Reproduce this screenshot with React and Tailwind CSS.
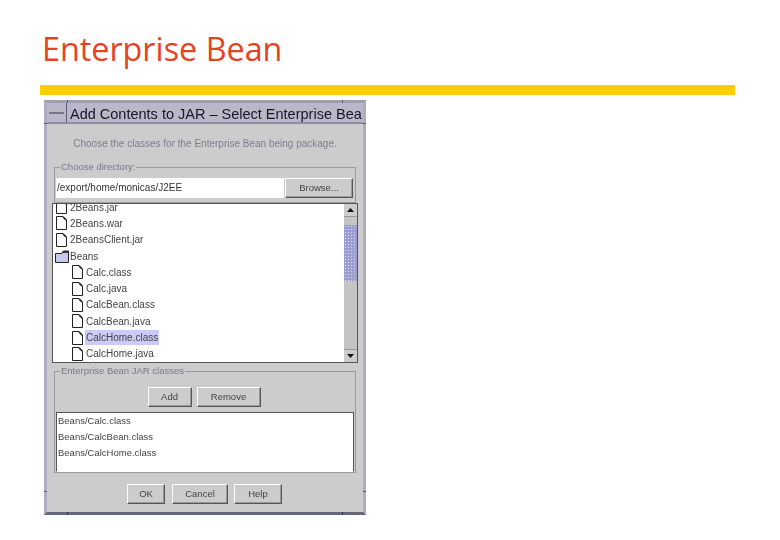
const Sans = "font-['Liberation_Sans',sans-serif]";

function FileIcon() {
  return (
    <svg width="11" height="14" viewBox="0 0 11 14" className="shrink-0">
      <path d="M0.5 0.5H7L10.5 4V13.5H0.5Z" fill="#fff" stroke="#222" strokeWidth="1" />
      <path d="M7 1 10 4" stroke="#222" strokeWidth="1.6" />
    </svg>
  );
}

function FolderIcon() {
  return (
    <svg width="14" height="13" viewBox="0 0 14 13" className="shrink-0">
      <path d="M0.5 3.5H7L8.5 1H13.5V12.5H0.5Z" fill="#c9c9ef" stroke="#222" strokeWidth="1" />
      <path d="M7.5 2H13.5" stroke="#333" strokeWidth="2" />
    </svg>
  );
}

function TreeRow({ label, indent, folder, selected }) {
  return (
    <div className={`flex h-[16.3px] items-center gap-[1px] ${indent ? "pl-[18px]" : "pl-[2px]"}`}>
      <div className="flex w-[13px] justify-center">{folder ? <FolderIcon /> : <FileIcon />}</div>
      <span className={`px-[1px] text-[10px] leading-[15px] text-[#444] ${selected ? "bg-[#cbcbf5]" : ""}`}>{label}</span>
    </div>
  );
}

function Btn({ label, className }) {
  return (
    <div className={`flex h-[20px] items-center justify-center border border-t-white border-l-white border-r-[#555] border-b-[#555] bg-[#cccccc] text-[9.5px] text-[#444] shadow-[inset_-1px_-1px_0_#999] ${className}`}>
      {label}
    </div>
  );
}

function Arrow({ down }) {
  return (
    <svg width="7" height="4" viewBox="0 0 7 4">
      <path d={down ? "M0 0H7L3.5 4Z" : "M3.5 0 7 4H0Z"} fill="#111" />
    </svg>
  );
}

function Fieldset({ legend, className, children }) {
  return (
    <div className={`relative mx-[7px] border border-[#9a9aa4] ${className}`}>
      <span className="absolute left-[5px] top-[-7px] bg-[#cccccc] px-[1px] text-[9.5px] leading-[12px] text-[#77778a]">{legend}</span>
      {children}
    </div>
  );
}

function Ticks() {
  return (
    <>
      <div className="absolute left-[20px] top-[-3px] h-[3px] w-px bg-[#5c5c70]" />
      <div className="absolute right-[20px] top-[-3px] h-[3px] w-px bg-[#5c5c70]" />
      <div className="absolute bottom-[-3px] left-[20px] h-[3px] w-px bg-[#33334a]" />
      <div className="absolute bottom-[-3px] right-[20px] h-[3px] w-px bg-[#33334a]" />
      <div className="absolute left-[-3px] top-[20px] h-px w-[3px] bg-[#5c5c70]" />
      <div className="absolute right-[-3px] top-[20px] h-px w-[3px] bg-[#5c5c70]" />
      <div className="absolute bottom-[20px] left-[-3px] h-px w-[3px] bg-[#5c5c70]" />
      <div className="absolute bottom-[20px] right-[-3px] h-px w-[3px] bg-[#5c5c70]" />
    </>
  );
}

export default function App() {
  return (
    <div className={`h-[540px] w-[780px] overflow-hidden bg-white ${Sans}`}>
      <h1 className="pl-[42px] pt-[28px] font-['Open_Sans',sans-serif] text-[32.3px] leading-[41px] font-normal text-[#e4431f]">
        Enterprise Bean
      </h1>
      <div className="ml-[40px] mt-[16px] h-[10px] w-[695px] bg-[#ffcc0a]" />
      <div className="relative ml-[44px] mt-[5px] h-[415px] w-[322px] border-x-[3px] border-y-[3px] border-x-[#adadc2] border-t-[#9d9db2] border-b-[#66667a] bg-[#cccccc] blur-[0.4px]">
        <Ticks />
        <div className="flex h-[21px] border-b-2 border-[#8d8da3] bg-[#b8b8c8]">
          <div className="flex w-[20px] items-center justify-center border-r border-[#5c5c70]">
            <div className="h-[2px] w-[15px] bg-[#77778c]" />
          </div>
          <div className="flex-1 overflow-hidden whitespace-nowrap pl-[3px] pt-[1px] text-[14.5px] leading-[21px] text-[#16162a]">
            Add Contents to JAR – Select Enterprise Bea
          </div>
        </div>
        <div className="mt-[14px] text-center text-[10px] leading-[12px] text-[#7d7d90]">
          Choose the classes for the Enterprise Bean being package.
        </div>
        <Fieldset legend="Choose directory:" className="mt-[17px] h-[36px]">
          <div className="ml-[1px] mt-[10px] flex gap-[1px]">
            <div className="h-[20px] w-[228px] overflow-hidden whitespace-nowrap bg-white pl-[1px] text-[10px] leading-[20px] text-[#333]">
              /export/home/monicas/J2EE
            </div>
            <Btn label="Browse..." className="w-[68px]" />
          </div>
        </Fieldset>
        <div className="ml-[5px] flex h-[160px] w-[306px] border border-[#555] bg-white">
          <div className="flex-1 overflow-hidden">
            <div className="-mt-[5px]">
              <TreeRow label="2Beans.jar" />
              <TreeRow label="2Beans.war" />
              <TreeRow label="2BeansClient.jar" />
              <TreeRow label="Beans" folder />
              <TreeRow label="Calc.class" indent />
              <TreeRow label="Calc.java" indent />
              <TreeRow label="CalcBean.class" indent />
              <TreeRow label="CalcBean.java" indent />
              <TreeRow label="CalcHome.class" indent selected />
              <TreeRow label="CalcHome.java" indent />
            </div>
          </div>
          <div className="flex w-[13px] flex-col bg-[#c4c4c4]">
            <div className="flex h-[13px] items-center justify-center border-b border-[#999] bg-[#ccc]"><Arrow /></div>
            <div className="mt-[8px] h-[56px] bg-[#9d9dd6] bg-[radial-gradient(#e0e0f5_1px,transparent_1px)] bg-[length:3px_3px]" />
            <div className="flex-1" />
            <div className="flex h-[13px] items-center justify-center border-t border-[#999] bg-[#ccc]"><Arrow down /></div>
          </div>
        </div>
        <Fieldset legend="Enterprise Bean JAR classes" className="mt-[8px] h-[102px]">
          <div className="mt-[15px] flex justify-center gap-[5px] pr-[2px]">
            <Btn label="Add" className="w-[44px]" />
            <Btn label="Remove" className="w-[64px]" />
          </div>
          <div className="ml-[1px] mt-[5px] h-[60px] w-[298px] border border-t-[#555] border-l-[#555] border-r-[#555] border-b-white bg-white pl-[1px] text-[9.5px] leading-[16px] text-[#444]">
            <div>Beans/Calc.class</div>
            <div>Beans/CalcBean.class</div>
            <div>Beans/CalcHome.class</div>
          </div>
        </Fieldset>
        <div className="mt-[11px] flex pl-[80px]">
          <Btn label="OK" className="w-[38px]" />
          <Btn label="Cancel" className="ml-[7px] w-[56px]" />
          <Btn label="Help" className="ml-[6px] w-[48px]" />
        </div>
      </div>
    </div>
  );
}
